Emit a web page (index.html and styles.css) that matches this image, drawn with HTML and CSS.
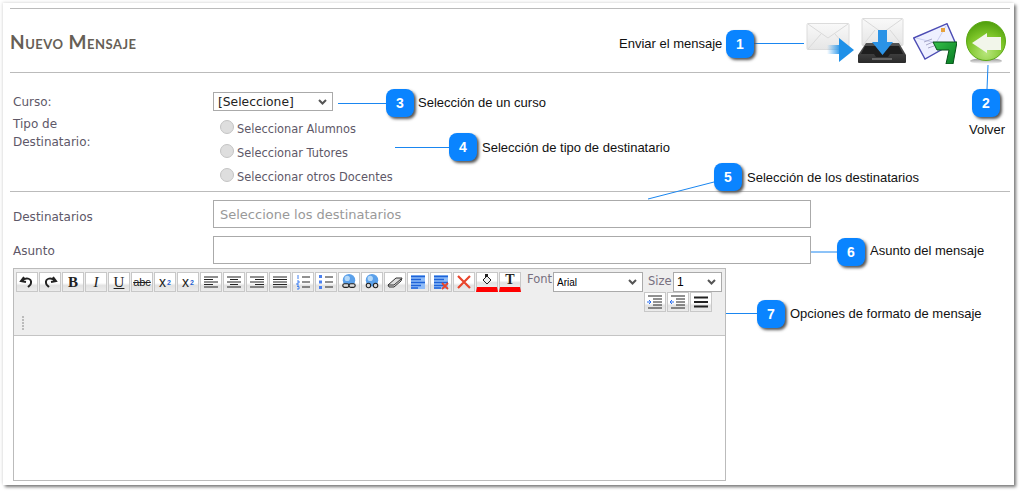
FILE: index.html
```html
<!DOCTYPE html>
<html lang="en">

<head>
	<meta charset="UTF-8" />
	<title>Nuevo Mensaje</title>
	<link rel="stylesheet" href="styles.css">
</head>

<body>
	<div class="sheet">
		<div class="page_header">
			<h1 class="page_title">Nuevo Mensaje</h1>
			<div class="actions">
				<svg class="icon_send" viewBox="0 0 50 42">
					<defs>
						<linearGradient id="env" x1="0" y1="0" x2="0" y2="1"><stop offset="0" stop-color="#f9f9f9"/><stop offset="1" stop-color="#e6e6e6"/></linearGradient>
						<linearGradient id="blue_tail" x1="0" y1="0" x2="1" y2="0"><stop offset="0" stop-color="#2a9af0" stop-opacity="0"/><stop offset="1" stop-color="#1e90e8"/></linearGradient>
						<linearGradient id="tray" x1="0" y1="0" x2="0" y2="1"><stop offset="0" stop-color="#555"/><stop offset="1" stop-color="#2a2a2a"/></linearGradient>
						<linearGradient id="arrow_green" x1="0" y1="0" x2="1" y2="1"><stop offset="0" stop-color="#35c04a"/><stop offset="1" stop-color="#067a22"/></linearGradient>
					</defs>
					<rect x="2" y="0.500" width="42" height="26" rx="1" fill="url(#env)" stroke="#dcdcdc"/>
					<path d="M3 1 L23 15 L43 1 M3 26 L16 11 M43 26 L30 11" fill="none" stroke="#dadada"/>
					<path d="M22 22 H36 V31 H22 Z" fill="url(#blue_tail)"/>
					<path d="M34 15 L49 27 L34 39 Z" fill="#1e90e8"/>
				</svg>
				<svg class="icon_inbox" viewBox="0 0 48 46">
					<rect x="4" y="0.500" width="41" height="27" rx="1" fill="url(#env)" stroke="#dcdcdc"/>
					<path d="M5 1 L24.500 15 L44 1 M5 27 L17 12 M44 27 L32 12" fill="none" stroke="#dadada"/>
					<path d="M8 25 H41 L48 37 V44 Q48 45 47 45 H1 Q0 45 0 44 V37 Z" fill="url(#tray)"/>
					<path d="M7 28 H41 L45 36 H32 L30 39 H18 L16 36 H3 Z" fill="#1e1e1e"/>
					<rect x="14" y="40" width="20" height="2" fill="#666"/>
					<path d="M20 12 H29 V24 H35 L24.500 37 L14 24 H20 Z" fill="#2b93e6"/>
				</svg>
				<svg class="icon_reply" viewBox="0 0 44 41">
					<path d="M0.700 15 L34 0.700 L42 19 L12 36 Z" fill="#eef0ff" stroke="#4c4cb4" stroke-width="1.400"/>
					<path d="M3 15 L23 20 L33 3" fill="none" stroke="#c9cdf0"/>
					<path d="M11 19 L19 16 M13 22 L20 19 M15 25 L21 23" stroke="#a8a8c8"/>
					<rect x="28" y="5" width="4" height="4" fill="#e8a23c"/>
					<path d="M20 19 H44 L40 41 H33 L36 27 H24 Z" fill="url(#arrow_green)" stroke="#064f18"/>
				</svg>
				<svg class="icon_back" viewBox="0 0 40 43">
					<defs>
						<radialGradient id="green" cx="0.5" cy="0.8" r="0.8"><stop offset="0" stop-color="#b8e67c"/><stop offset="0.6" stop-color="#7cc428"/><stop offset="1" stop-color="#4f9e0c"/></radialGradient>
						<linearGradient id="shade" x1="0" y1="0" x2="0" y2="1"><stop offset="0" stop-color="#888"/><stop offset="1" stop-color="#888" stop-opacity="0"/></linearGradient>
					</defs>
					<ellipse cx="20" cy="40" rx="16" ry="3" fill="url(#shade)"/>
					<circle cx="20" cy="20" r="19.500" fill="url(#green)" stroke="#5aa814"/>
					<path d="M6 22 L21 12 V16 H35 V29 H21 V32 Z" fill="#f2f6ea"/>
				</svg>
			</div>
		</div>

		<div class="form_top">
			<div class="form_row row_course">
				<label class="form_label" for="curso">Curso:</label>
				<select class="course_select" id="curso">
					<option>[Seleccione]</option>
				</select>
			</div>
			<div class="form_row row_type">
				<span class="form_label">Tipo de Destinatario:</span>
				<div class="radio_list">
					<label class="radio_item"><input type="radio" name="tipo" disabled />Seleccionar Alumnos</label>
					<label class="radio_item"><input type="radio" name="tipo" disabled />Seleccionar Tutores</label>
					<label class="radio_item"><input type="radio" name="tipo" disabled />Seleccionar otros Docentes</label>
				</div>
			</div>
		</div>

		<div class="form_bottom">
			<div class="form_row row_field">
				<label class="form_label" for="dest">Destinatarios</label>
				<input class="text_field" id="dest" type="text" placeholder="Seleccione los destinatarios" />
			</div>
			<div class="form_row row_field">
				<label class="form_label" for="asunto">Asunto</label>
				<input class="text_field" id="asunto" type="text" />
			</div>
		</div>

		<div class="editor">
			<div class="toolbar">
				<div class="tool_row">
					<button class="tool"><svg viewBox="0 0 16 16"><path d="M5 3 L2 7 L7 8 M3 7 C6 3 13 4 12 9 C12 11 10 12 9 13" fill="none" stroke="#222" stroke-width="2"/></svg></button>
					<button class="tool"><svg viewBox="0 0 16 16"><path d="M11 3 L14 7 L9 8 M13 7 C10 3 3 4 4 9 C4 11 6 12 7 13" fill="none" stroke="#222" stroke-width="2"/></svg></button>
					<button class="tool tool_b">B</button>
					<button class="tool tool_i">I</button>
					<button class="tool tool_u">U</button>
					<button class="tool tool_s">abc</button>
					<button class="tool tool_x">x<sub>2</sub></button>
					<button class="tool tool_x">x<sup>2</sup></button>
					<button class="tool"><svg viewBox="0 0 16 16"><path d="M1 3 H15 M1 5.500 H10 M1 8 H15 M1 10.500 H10 M1 13 H15" stroke="#222"/></svg></button>
					<button class="tool"><svg viewBox="0 0 16 16"><path d="M1 3 H15 M4 5.500 H12 M1 8 H15 M4 10.500 H12 M1 13 H15" stroke="#222"/></svg></button>
					<button class="tool"><svg viewBox="0 0 16 16"><path d="M1 3 H15 M6 5.500 H15 M1 8 H15 M6 10.500 H15 M1 13 H15" stroke="#222"/></svg></button>
					<button class="tool"><svg viewBox="0 0 16 16"><path d="M1 3 H15 M1 5.500 H15 M1 8 H15 M1 10.500 H15 M1 13 H15" stroke="#222"/></svg></button>
					<button class="tool"><svg viewBox="0 0 16 16"><path d="M3 1 V5 M2 7 H4 V9 H2 V11 H4 M2 12.500 H4 V15 H2" fill="none" stroke="#3f7ff0"/><path d="M7 3 H15 M7 8 H15 M7 13 H15" stroke="#222"/></svg></button>
					<button class="tool"><svg viewBox="0 0 16 16"><path d="M1 1 H4 V4 H1 Z M1 6.500 H4 V9.500 H1 Z M1 12 H4 V15 H1 Z" fill="#4a80f0"/><path d="M7 3 H15 M7 8 H15 M7 13 H15" stroke="#222"/></svg></button>
					<button class="tool"><svg viewBox="0 0 18 18"><circle cx="9" cy="7" r="7" fill="#5aa0ea"/><circle cx="7" cy="5" r="3" fill="#b4d8f8"/><rect x="2" y="11" width="7" height="4" rx="2" fill="#ddd" stroke="#222" stroke-width="1.300"/><rect x="9" y="11" width="7" height="4" rx="2" fill="#ddd" stroke="#222" stroke-width="1.300"/></svg></button>
					<button class="tool"><svg viewBox="0 0 18 18"><circle cx="9" cy="7" r="7" fill="#5aa0ea"/><circle cx="7" cy="5" r="3" fill="#b4d8f8"/><circle cx="5" cy="13" r="2.500" fill="#ddd" stroke="#222" stroke-width="1.200"/><circle cx="13" cy="13" r="2.500" fill="#ddd" stroke="#222" stroke-width="1.200"/></svg></button>
					<button class="tool"><svg viewBox="0 0 16 16"><path d="M1 11 L9 4 H15 L14 7 L7 13 H2 Z" fill="#ddd" stroke="#333"/><path d="M1 11 H7 L14 5" fill="none" stroke="#333"/></svg></button>
					<button class="tool"><svg viewBox="0 0 16 16"><rect x="1" y="1" width="14" height="14" fill="#8fbcf8"/><path d="M1 2.500 H15 M1 5.500 H11 M1 8.500 H15 M1 11.500 H11 M1 14 H8" stroke="#1f63d8" stroke-width="1.600"/></svg></button>
					<button class="tool"><svg viewBox="0 0 16 16"><rect x="1" y="1" width="14" height="14" fill="#8fbcf8"/><path d="M1 2.500 H15 M1 5.500 H11 M1 8.500 H15 M1 11.500 H11 M1 14 H8" stroke="#1f63d8" stroke-width="1.600"/><path d="M9 9 L15 15 M15 9 L9 15" stroke="#e8452c" stroke-width="1.800"/></svg></button>
					<button class="tool"><svg viewBox="0 0 16 16"><path d="M2 2 L14 14 M14 2 L2 14" stroke="#e8452c" stroke-width="2.200"/></svg></button>
					<button class="tool tool_color"><svg viewBox="0 0 16 12"><path d="M4 7 L8 3 L12 7 L8 11 Z" fill="#eee" stroke="#222"/><path d="M6 1 H9 V4 H6 Z" fill="#222"/></svg></button>
					<button class="tool tool_color tool_t">T</button>
					<span class="tool_label">Font</span>
					<select class="tool_select font_select"><option>Arial</option></select>
					<span class="tool_label size_label">Size</span>
					<select class="tool_select size_select"><option>1</option></select>
				</div>
				<div class="tool_row tool_row_right">
					<button class="tool"><svg viewBox="0 0 16 16"><path d="M1 2 H15 M6 5 H15 M6 8 H15 M6 11 H15 M1 14 H15" stroke="#222"/><path d="M0 8 H4 M2 6 L4 8 L2 10" fill="none" stroke="#2a6ef0"/></svg></button>
					<button class="tool"><svg viewBox="0 0 16 16"><path d="M1 2 H15 M6 5 H15 M6 8 H15 M6 11 H15 M1 14 H15" stroke="#222"/><path d="M0 8 H4 M2 6 L0 8 L2 10" fill="none" stroke="#2a6ef0"/></svg></button>
					<button class="tool"><svg viewBox="0 0 16 16"><path d="M1 3.500 H15 M1 8 H15 M1 12.500 H15" stroke="#222" stroke-width="2"/></svg></button>
				</div>
				<div class="grip"></div>
			</div>
			<div class="editor_body"></div>
		</div>

		<!-- numbered notes that sit on top of the screenshot -->
		<svg class="note_lines" viewBox="0 0 1011 482">
			<path d="M751 40.500 H801 M985 62 L984 86 M335 100.500 H383 M392 144.500 H446 M645 196 L711 179 M808 249 H834 M723 310.500 H754" fill="none" stroke="#1a86f0"/>
		</svg>
		<span class="badge badge_1">1</span>
		<span class="badge badge_2">2</span>
		<span class="badge badge_3">3</span>
		<span class="badge badge_4">4</span>
		<span class="badge badge_5">5</span>
		<span class="badge badge_6">6</span>
		<span class="badge badge_7">7</span>
		<span class="note note_1">Enviar el mensaje</span>
		<span class="note note_2">Volver</span>
		<span class="note note_3">Selección de un curso</span>
		<span class="note note_4">Selección de tipo de destinatario</span>
		<span class="note note_5">Selección de los destinatarios</span>
		<span class="note note_6">Asunto del mensaje</span>
		<span class="note note_7">Opciones de formato de mensaje</span>
	</div>
</body>

</html>
```

FILE: styles.css
```css
body {
	box-sizing: border-box;
	margin: 0;
	min-height: 100vh;
	padding: 3px 0 0 3px;
	background-color: #fff;
	font-family: "DejaVu Sans", sans-serif;
}

.sheet {
	position: relative;
	box-sizing: border-box;
	width: 1011px;
	height: 482px;
	padding: 5px 4px 0 7px;
	background-color: #fff;
	box-shadow: 2px 2px 3px #777, -1px -1px 3px #e8e8e8;
}

.page_header {
	display: flex;
	justify-content: space-between;
	align-items: flex-start;
	box-sizing: border-box;
	height: 65px;
	border-top: 1px solid #bbb;
	border-bottom: 1px solid #bbb;
}

.page_title {
	margin: 21px 0 0;
	font-family: "Lato", sans-serif;
	font-size: 19px;
	font-weight: 700;
	font-variant: small-caps;
	letter-spacing: 0.500px;
	color: #675f56;
}

.actions {
	display: flex;
	align-items: flex-start;
	padding: 9px 4px 0 0;
}

.icon_send {
	width: 50px;
	height: 42px;
	margin-top: 5px;
}

.icon_inbox {
	width: 48px;
	height: 46px;
	margin-left: 3px;
}

.icon_reply {
	width: 44px;
	height: 41px;
	margin: 5px 0 0 7px;
}

.icon_back {
	width: 40px;
	height: 43px;
	margin: 3px 0 0 9px;
}

.form_top {
	padding: 19px 0 0 3px;
	height: 99px;
	border-bottom: 1px solid #bbb;
	box-sizing: content-box;
}

.form_row {
	display: flex;
}

.form_label {
	flex: none;
	width: 110px;
	margin-right: 90px;
	font-size: 12px;
	line-height: 18px;
	color: #5e5868;
}

.row_course {
	height: 18px;
}

.row_course .form_label,
.row_type .form_label {
	padding-top: 1px;
}

.course_select,
.tool_select {
	appearance: none;
	background: #fff url("data:image/svg+xml,%3Csvg xmlns='http://www.w3.org/2000/svg' width='9' height='6'%3E%3Cpath d='M1 1 L4.500 4.500 L8 1' fill='none' stroke='%23555' stroke-width='2'/%3E%3C/svg%3E") no-repeat right 5px center;
	border: 1px solid #aaa;
	border-radius: 0;
	padding: 0;
	box-sizing: border-box;
}

.course_select {
	width: 120px;
	height: 19px;
	padding-left: 4px;
	font-family: "DejaVu Sans", sans-serif;
	font-size: 12.300px;
	color: #222;
}

.row_type {
	margin-top: 4px;
}

.radio_list {
	display: flex;
	flex-direction: column;
	gap: 6px;
	padding: 6px 0 0 7px;
}

.radio_item {
	display: flex;
	align-items: flex-start;
	height: 18px;
	font-size: 11.400px;
	line-height: 18px;
	color: #5e5868;
}

.radio_item input {
	appearance: none;
	box-sizing: border-box;
	width: 14px;
	height: 14px;
	margin: 0 3px 0 0;
	border: 1px solid #c4c4c4;
	border-radius: 50%;
	background-color: #dedede;
}

.form_bottom {
	padding: 8px 0 0 3px;
}

.row_field {
	align-items: center;
	height: 28px;
	margin-bottom: 8px;
}

.row_field .form_label {
	padding-top: 6px;
}

.row_field:last-child .form_label {
	padding-top: 2px;
}

.text_field {
	box-sizing: border-box;
	width: 598px;
	height: 28px;
	padding: 0 6px;
	border: 1px solid #aaa;
	font-family: "DejaVu Sans", sans-serif;
	font-size: 13px;
}

.text_field::placeholder {
	color: #999;
}

.editor {
	box-sizing: border-box;
	width: 713px;
	height: 213px;
	margin: -4px 0 0 3px;
	border: 1px solid #bbb;
}

.toolbar {
	position: relative;
	box-sizing: border-box;
	height: 67px;
	padding: 3px 0 0 2px;
	border-bottom: 1px solid #c4c4c4;
	background-color: #eee;
}

.tool_row {
	display: flex;
	gap: 1px;
	height: 20px;
}

.tool_row_right {
	justify-content: flex-end;
	padding-right: 13px;
}

.tool {
	display: flex;
	justify-content: center;
	align-items: center;
	box-sizing: border-box;
	width: 22px;
	height: 20px;
	padding: 0;
	border: 1px solid #c8c8c8;
	background: linear-gradient(#fff 0, #fff 55%, #e2e2e2 70%, #ececec 100%);
	font-family: "Liberation Serif", serif;
	font-size: 15px;
	line-height: 1;
	color: #222;
}

.tool svg {
	width: 16px;
	height: 16px;
}

.tool_b {
	font-weight: 700;
}

.tool_i {
	font-style: italic;
}

.tool_u {
	text-decoration: underline;
}

.tool_s {
	font-family: "Liberation Sans", sans-serif;
	font-size: 11px;
	text-decoration: line-through;
}

.tool_x {
	font-family: "Liberation Sans", sans-serif;
	font-size: 14px;
}

.tool_x sub,
.tool_x sup {
	margin-left: 1px;
	font-size: 7px;
	font-weight: 700;
	color: #1f5fd0;
}

.tool_color {
	align-items: flex-start;
	border-bottom: 5px solid #f00;
}

.tool_color svg {
	height: 12px;
}

.tool_t {
	font-weight: 700;
	font-size: 14px;
}

.tool_label {
	width: 25px;
	margin-left: 5px;
	font-size: 11.500px;
	line-height: 14px;
	color: #77707f;
}

.size_label {
	width: 24px;
	margin-left: 4px;
	line-height: 18px;
}

.tool_select {
	height: 20px;
	padding-left: 3px;
	font-family: "Liberation Sans", sans-serif;
	font-size: 10px;
}

.font_select {
	width: 90px;
}

.size_select {
	width: 49px;
	font-size: 12px;
}

.grip {
	position: absolute;
	left: 8px;
	top: 47px;
	width: 2px;
	height: 14px;
	background: repeating-linear-gradient(#bbb 0, #bbb 2px, transparent 2px, transparent 3px);
}

.editor_body {
	height: 144px;
	background-color: #fff;
}

/* numbered notes */
.note_lines {
	position: absolute;
	left: 0;
	top: 0;
	width: 1011px;
	height: 482px;
	pointer-events: none;
}

.badge {
	position: absolute;
	width: 28px;
	height: 28px;
	border-radius: 8px;
	background-color: #0a84ff;
	box-shadow: 2px 2px 3px #555;
	font-family: "Liberation Sans", sans-serif;
	font-size: 14px;
	font-weight: 700;
	line-height: 28px;
	text-align: center;
	color: #fff;
}

.badge_1 { left: 723px; top: 27px; }
.badge_2 { left: 969px; top: 86px; }
.badge_3 { left: 383px; top: 86px; }
.badge_4 { left: 446px; top: 130px; }
.badge_5 { left: 711px; top: 160px; }
.badge_6 { left: 834px; top: 235px; }
.badge_7 { left: 754px; top: 297px; }

.note {
	position: absolute;
	font-family: "Liberation Sans", sans-serif;
	font-size: 13px;
	line-height: 14px;
	white-space: nowrap;
	color: #111;
}

.note_1 { left: 616px; top: 34px; }
.note_2 { left: 966px; top: 120px; }
.note_3 { left: 415px; top: 93px; }
.note_4 { left: 479px; top: 138px; }
.note_5 { left: 744px; top: 168px; }
.note_6 { left: 867px; top: 241px; }
.note_7 { left: 787px; top: 304px; }
```
